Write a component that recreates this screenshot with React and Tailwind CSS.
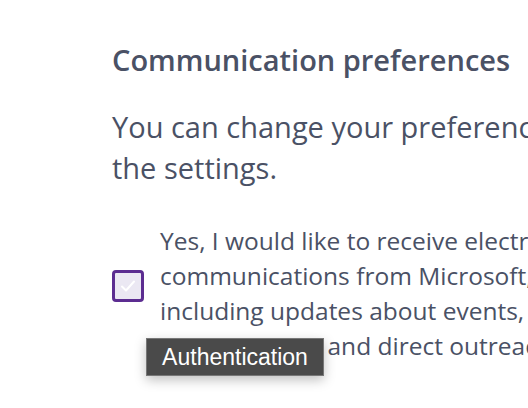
import React from 'react';

const Checkbox = () => (
  <div className="w-8 h-8 shrink-0 rounded-[4px] border-[3px] border-[#5c2d91] bg-[#ebe8f3] flex items-center justify-center mt-[-14px]">
    <svg width="20" height="20" viewBox="0 0 20 20" fill="none">
      <path d="M4 10.5l4 4 8-9" stroke="#ffffff" strokeWidth="2" strokeLinecap="round" strokeLinejoin="round" />
    </svg>
  </div>
);

export default function App() {
  return (
    <div className="w-[528px] h-[408px] bg-white overflow-hidden relative font-['Open_Sans','Noto_Sans',sans-serif] text-[#4a5165]">
      <div className="pl-[112px] pt-[40px] w-[800px] whitespace-nowrap">
        <h2 className="text-[29px] font-semibold leading-[40px]">Communication preferences</h2>
        <p className="mt-[26px] text-[29px] leading-[41px]">
          You can change your preferences at any time in
          <br />
          the settings.
        </p>
        <div className="mt-[35px] flex items-center gap-[16px]">
          <Checkbox />
          <p className="text-[24.5px] leading-[35px]">
            Yes, I would like to receive electronic
            <br />
            communications from Microsoft,
            <br />
            including updates about events, offers,
            <br />
            opportunities, and direct outreach.
          </p>
        </div>
      </div>
      <div className="absolute left-[146px] top-[338px] w-[178px] h-[38px] bg-[#4a4a4a] border border-[#777] shadow-[0_4px_12px_rgba(0,0,0,0.25)] flex items-center justify-center text-white text-[23px] font-['Liberation_Sans',sans-serif]">
        Authentication
      </div>
    </div>
  );
}
